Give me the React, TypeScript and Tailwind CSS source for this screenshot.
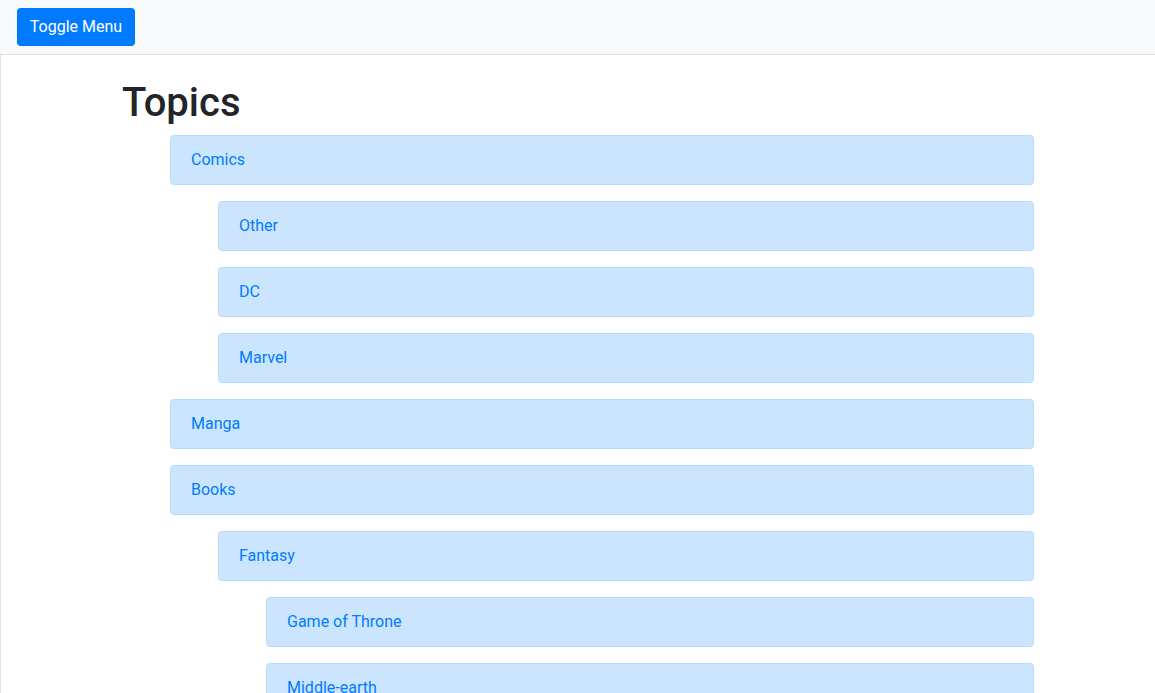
import React from "react";

type Item = { label: string; level: number };

const items: Item[] = [
  { label: "Comics", level: 0 },
  { label: "Other", level: 1 },
  { label: "DC", level: 1 },
  { label: "Marvel", level: 1 },
  { label: "Manga", level: 0 },
  { label: "Books", level: 0 },
  { label: "Fantasy", level: 1 },
  { label: "Game of Throne", level: 2 },
  { label: "Middle-earth", level: 2 },
  { label: "Harry Potter", level: 2 },
];

const indent = ["ml-[48px]", "ml-[96px]", "ml-[144px]"];

export default function App() {
  return (
    <div
      className="h-[693px] w-[1155px] overflow-hidden bg-white text-[#212529] flex flex-col"
      style={{ fontFamily: "Roboto, 'Liberation Sans', sans-serif" }}
    >
      <nav className="h-[55px] shrink-0 bg-[#f8f9fa] border-b border-[#dee2e6] px-[17px] pt-[8px]">
        <button className="h-[38px] w-[118px] rounded-[4px] bg-[#007bff] text-white text-[16px] leading-[24px]">
          Toggle Menu
        </button>
      </nav>
      <main className="flex-1 border-l border-[#dee2e6]">
        <div className="ml-[121px] w-[912px] pt-[24px]">
          <h1 className="text-[40px] leading-[48px] font-medium mb-[8px]">Topics</h1>
          <div className="flex flex-col gap-[16px]">
            {items.map((it, i) => (
              <div
                key={i}
                className={`${indent[it.level]} h-[50px] flex items-center px-[20px] bg-[#cce5ff] border border-[#b8daff] rounded-[4px] text-[#007bff] text-[16px]`}
              >
                {it.label}
              </div>
            ))}
          </div>
        </div>
      </main>
    </div>
  );
}
